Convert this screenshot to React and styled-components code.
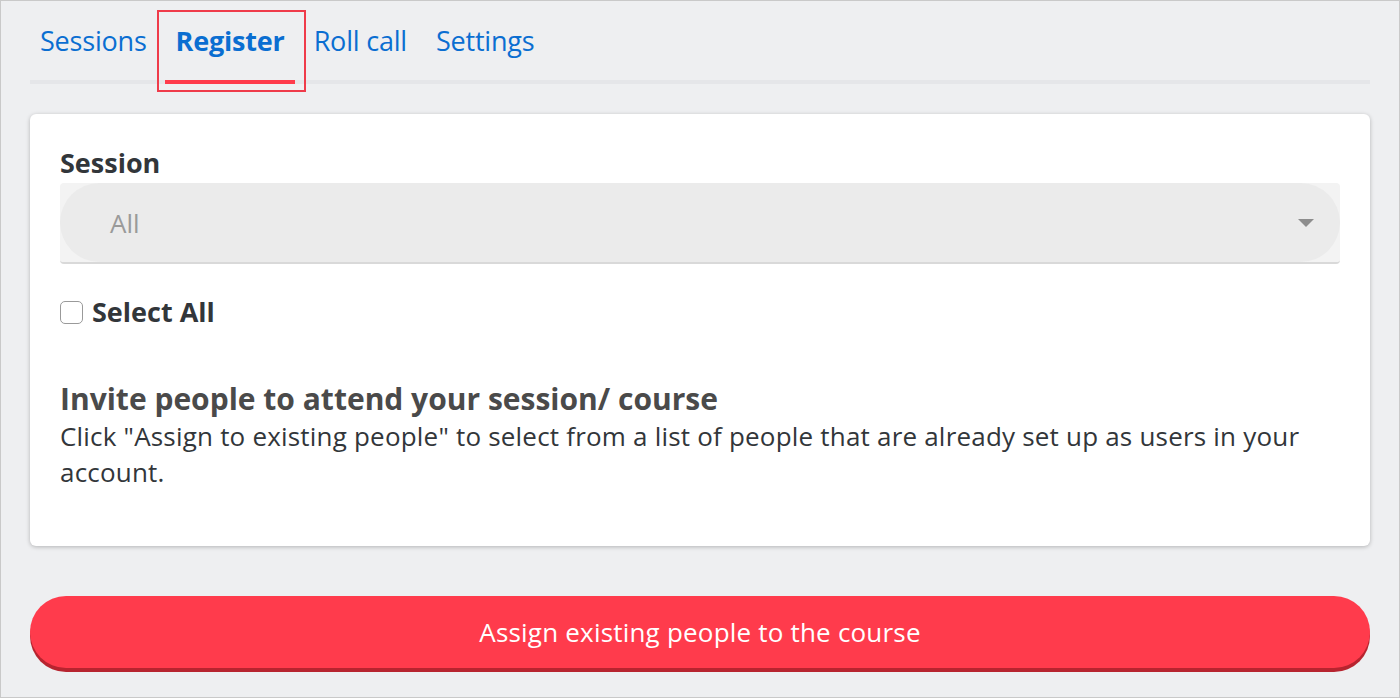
import React, { useState } from "react";
import styled, { createGlobalStyle } from "styled-components";

const GlobalStyle = createGlobalStyle`
  html, body {
    margin: 0;
    padding: 0;
    background: #eeeff1;
  }
  body {
    font-family: "Open Sans", "Liberation Sans", Arial, sans-serif;
  }
`;

const Page = styled.div`
  box-sizing: border-box;
  width: 1400px;
  height: 698px;
  border: 1px solid #c9c9c9;
  padding: 0 29px;
  display: flex;
  flex-direction: column;
`;

const TabBar = styled.div`
  display: flex;
  align-items: flex-start;
  column-gap: 29px;
  height: 83px;
  border-bottom: 4px solid #e5e6e9;
  box-sizing: border-box;
  padding-left: 10px;
`;

const Tab = styled.button`
  position: relative;
  background: none;
  border: none;
  padding: 23px 0 0;
  cursor: pointer;
  font-family: inherit;
  font-size: 27px;
  line-height: 34px;
  letter-spacing: -0.2px;
  color: #0a6ed1;
  font-weight: ${(p) => (p.active ? 700 : 400)};

  /* focus frame round the current tab */
  &::before {
    content: "";
    display: ${(p) => (p.active ? "block" : "none")};
    position: absolute;
    left: -19px;
    right: -21px;
    top: 9px;
    height: 82px;
    box-sizing: border-box;
    border: 2px solid #ef3b4a;
  }

  &::after {
    content: "";
    display: ${(p) => (p.active ? "block" : "none")};
    position: absolute;
    left: -11px;
    right: -10px;
    top: 79px;
    height: 4px;
    background: #ff3b4c;
  }
`;

const Card = styled.div`
  margin-top: 30px;
  background: #fff;
  border-radius: 6px;
  box-shadow: 0 1px 4px rgba(0, 0, 0, 0.25);
  padding: 32px 30px 56px;
  color: #32363a;
`;

const Label = styled.div`
  font-size: 27px;
  font-weight: 700;
  line-height: 34px;
  margin-bottom: 3px;
`;

const SelectShell = styled.div`
  background: #f3f3f3;
  border-radius: 4px;
  border-bottom: 2px solid #d9d9d9;
  height: 81px;
  box-sizing: border-box;
`;

const SelectPill = styled.div`
  height: 79px;
  border-radius: 40px;
  background: #ebebeb;
  display: flex;
  align-items: center;
  justify-content: space-between;
  padding: 0 26px 0 50px;
  font-size: 26px;
  color: #9a9a9a;
`;

const Caret = styled.span`
  width: 0;
  height: 0;
  border-left: 8px solid transparent;
  border-right: 8px solid transparent;
  border-top: 8px solid #8d8d8d;
`;

const CheckRow = styled.label`
  display: flex;
  align-items: center;
  gap: 9px;
  margin-top: 32px;
  font-size: 27px;
  font-weight: 700;
  line-height: 32px;
  cursor: pointer;
`;

const Box = styled.span`
  width: 23px;
  height: 23px;
  box-sizing: border-box;
  border: 1.5px solid #9a9a9a;
  border-radius: 5px;
  background: ${(p) => (p.checked ? "#0a6ed1" : "#fff")};
`;

const Heading = styled.h2`
  margin: 52px 0 0;
  font-size: 30px;
  font-weight: 700;
  line-height: 38px;
  color: #4a4a4a;
`;

const Text = styled.p`
  margin: 0;
  font-size: 26px;
  line-height: 36px;
  letter-spacing: 0.2px;
  color: #32363a;
`;

const AssignButton = styled.button`
  margin-top: 50px;
  height: 72px;
  border: none;
  border-radius: 36px;
  background: #ff3b4c;
  box-shadow: 0 4px 0 #b7242f;
  color: #fff;
  font-family: inherit;
  font-size: 26px;
  letter-spacing: 0.2px;
  cursor: pointer;
`;

const tabs = ["Sessions", "Register", "Roll call", "Settings"];

const App = () => {
  const [active, setActive] = useState("Register");
  const [all, setAll] = useState(false);

  return (
    <Page>
      <GlobalStyle />
      <TabBar>
        {tabs.map((t) => (
          <Tab key={t} active={t === active} onClick={() => setActive(t)}>
            {t}
          </Tab>
        ))}
      </TabBar>
      <Card>
        <Label>Session</Label>
        <SelectShell>
          <SelectPill>
            <span>All</span>
            <Caret />
          </SelectPill>
        </SelectShell>
        <CheckRow onClick={() => setAll(!all)}>
          <Box checked={all} />
          Select All
        </CheckRow>
        <Heading>Invite people to attend your session/ course</Heading>
        <Text>
          Click "Assign to existing people" to select from a list of people that are already set up as
          users in your account.
        </Text>
      </Card>
      <AssignButton>Assign existing people to the course</AssignButton>
    </Page>
  );
};

export default App;
